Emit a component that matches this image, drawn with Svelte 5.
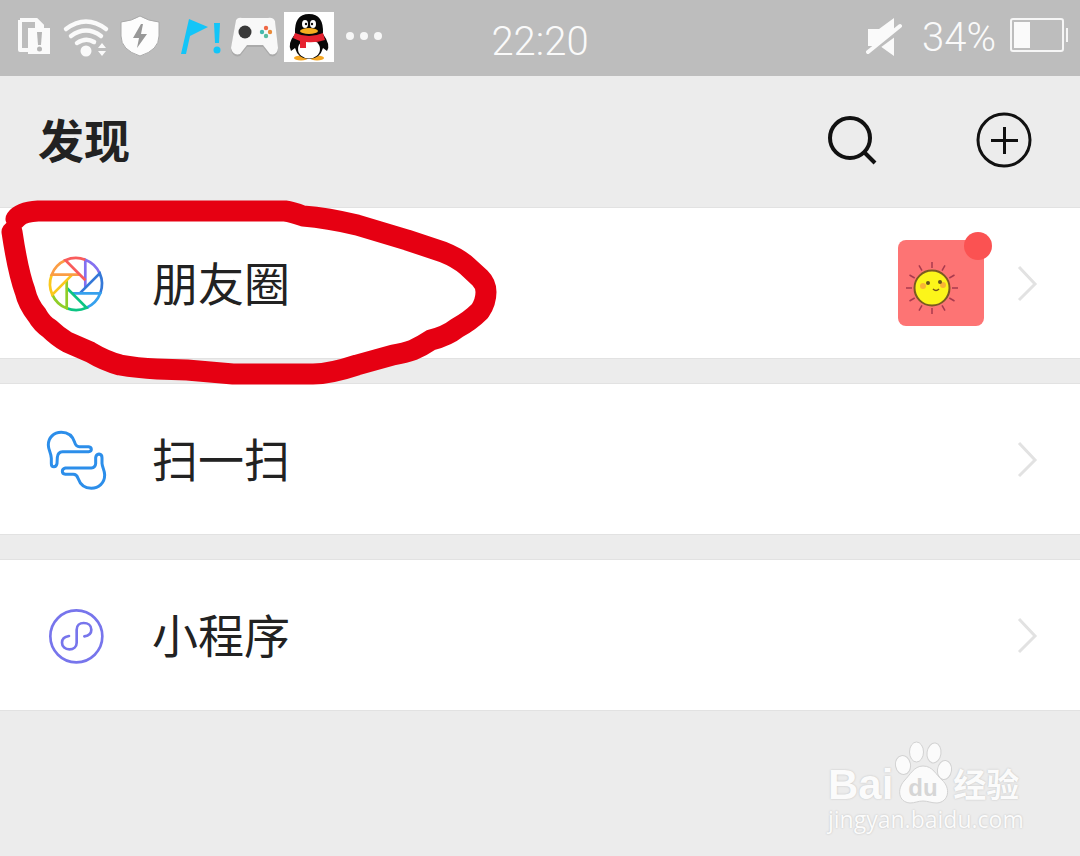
<script>
  const blades = ['#8470f0', '#3478d8', '#36a1ee', '#0cc483', '#8fce28', '#fac81c', '#fb9d45', '#f95c5c'];
  const rays = Array.from({ length: 12 }, (_, i) => i * 30);
  const rows = [
    { id: 'moments', label: '朋友圈' },
    { id: 'scan', label: '扫一扫' },
    { id: 'mini', label: '小程序' }
  ];
</script>

<div class="screen">
  <div class="status">
    <div class="notices">
      <svg viewBox="7 0 54 76" aria-hidden="true">
        <path d="M20 20H36L42 26V30M28 50H20V20" fill="none" stroke="#fafafa" stroke-width="4" stroke-linejoin="round" />
        <path d="M35 18H37L44 25V28H35z" fill="#fafafa" />
        <path d="M28 28H50V54H28z" fill="#fafafa" />
        <path d="M37 32h5l-1 13h-3z" fill="#b5b5b5" />
        <circle cx="39.500" cy="49" r="2.500" fill="#b5b5b5" />
      </svg>
      <svg viewBox="61 0 54 76" aria-hidden="true">
        <g fill="none" stroke="#fafafa" stroke-width="4.500" stroke-linecap="round">
          <path d="M66 29Q86 14 106 29" />
          <path d="M71 36Q86 25 101 36" />
          <path d="M77 43Q86 37 94 42" />
        </g>
        <circle cx="86" cy="51" r="5.500" fill="#fafafa" />
        <path d="M98 48l4-5 4 5zM98 51h8l-4 5z" fill="#fafafa" />
      </svg>
      <svg viewBox="115 0 54 76" aria-hidden="true">
        <path d="M140 16Q148 21 159 22V36Q159 50 140 56Q121 50 121 36V22Q132 21 140 16z" fill="#fdfdfd" stroke="#aaa" />
        <path d="M141 24L133 38H139L137 48L147 34H141L143 24z" fill="#989898" />
      </svg>
      <svg class="flag" viewBox="175 0 54 76" aria-hidden="true">
        <path d="M189 19L208 27L190 36L186 54H181z" fill="#13c5f8" />
        <path d="M214 23h6l-1 20h-4z" fill="#13c5f8" />
        <circle cx="217" cy="50" r="3.500" fill="#13c5f8" />
      </svg>
      <svg viewBox="229 0 54 76" aria-hidden="true">
        <path d="M236 20Q238 17 242 19H268Q273 17 275 21L278 50Q277 58 270 56L263 47H247L240 56Q233 58 231 50z" fill="#aaa" />
        <path d="M236 20Q238 17 242 18H268Q273 17 275 21L278 48Q277 56 270 54L263 45H247L240 54Q233 56 231 48z" fill="#f8f8f8" />
        <circle cx="245" cy="32" r="6.500" fill="#393939" />
        <circle cx="266" cy="28" r="2.200" fill="#ef6845" />
        <circle cx="270" cy="32" r="2.200" fill="#e98a38" />
        <circle cx="262" cy="32" r="2.200" fill="#43b9ae" />
        <circle cx="266" cy="36" r="2.200" fill="#58bca0" />
      </svg>
      <svg viewBox="283 0 54 76" aria-hidden="true">
        <path d="M284 12H334V62H284z" fill="#fff" />
        <ellipse cx="301" cy="58" rx="7" ry="2.500" fill="#f5a623" />
        <ellipse cx="317" cy="58" rx="7" ry="2.500" fill="#f5a623" />
        <path d="M309 14Q324 14 323 34Q331 45 327 51L323 48Q320 59 309 59Q298 59 295 48L291 51Q287 44 295 34Q294 14 309 14z" fill="#080808" />
        <ellipse cx="309" cy="49" rx="11" ry="9.500" fill="#fff" />
        <path d="M295 33Q309 39 323 33L325 40Q316 43 306 42V48H300V41Q295 39 293 38z" fill="#e62230" />
        <ellipse cx="305" cy="24" rx="3" ry="4" fill="#fff" />
        <ellipse cx="313" cy="24" rx="3" ry="4" fill="#fff" />
        <circle cx="306" cy="24" r="1.200" fill="#111" />
        <circle cx="312" cy="24" r="1.200" fill="#111" />
        <ellipse cx="309" cy="31" rx="9" ry="3" fill="#f6ae20" />
      </svg>
      <svg viewBox="337 0 54 76" aria-hidden="true">
        <g fill="#f7f7f7">
          <circle cx="350" cy="36" r="4" /><circle cx="364" cy="36" r="4" /><circle cx="378" cy="36" r="4" />
        </g>
      </svg>
    </div>
    <time>22:20</time>
    <div class="power">
      <svg class="mute" viewBox="866 0 44 76" aria-hidden="true">
        <path d="M868 29H879L894 18V56L880 46H868z" fill="#fafafa" />
        <path d="M866 55L903 28" stroke="#bdbdbd" stroke-width="5" />
        <path d="M868 52L900 26" stroke="#fafafa" stroke-width="4" stroke-linecap="round" />
      </svg>
      <span>34%</span>
      <svg class="battery" viewBox="1008 0 62 76" aria-hidden="true">
        <rect x="1011" y="19" width="52" height="32" rx="2" fill="none" stroke="#f6f6f6" stroke-width="2" />
        <path d="M1014 22H1030V48H1014z" fill="#fafafa" />
        <path d="M1067 28V42" stroke="#f6f6f6" stroke-width="2" />
      </svg>
    </div>
  </div>

  <header>
    <h1>发现</h1>
    <button type="button" class="tool" aria-label="搜索">
      <svg viewBox="820 110 64 64" aria-hidden="true">
        <g fill="none" stroke="#111" stroke-width="4"><circle cx="850" cy="138" r="20" /><path d="M864 152L875 163" /></g>
      </svg>
    </button>
    <button type="button" class="tool" aria-label="添加">
      <svg viewBox="972 110 64 64" aria-hidden="true">
        <g fill="none" stroke="#111" stroke-width="3"><circle cx="1004" cy="140" r="26" /><path d="M991 140.500H1018M1004.500 127V154" /></g>
      </svg>
    </button>
  </header>

  <ul>
    {#each rows as row (row.id)}
      <li>
        <button type="button" class="row">
          {#if row.id === 'moments'}
            <svg class="icon" viewBox="-32 -33 64 64" aria-hidden="true">
              {#each blades as color, i}
                <path d="M9.300 4V-24.300A26 26 0 0 1 23.700 -10.600" transform="rotate({i * 45})" fill="none" stroke={color} stroke-width="2.700" />
              {/each}
            </svg>
          {:else if row.id === 'scan'}
            <svg class="icon" viewBox="42 36 192 192" aria-hidden="true">
              <g fill="none" stroke="#2c8eea" stroke-width="9" stroke-linejoin="round">
                <path d="M176 110H98Q83 111 82 127L81 146Q79 155 72 155Q64 155 64 146V130C63 112 55 105 55 90C55 68 71 52 94 52C115 52 128 64 134 82Q138 95 148 95H176Q184 96 184 103T176 110z" />
                <path d="M106 159H184Q196 158 197 146V128Q198 118 207 117Q216 118 216 128V145C217 158 224 165 224 180C224 204 206 220 184 220C163 220 150 207 144 190Q140 178 130 178H106Q97 177 97 169T106 159z" />
              </g>
            </svg>
          {:else}
            <svg class="icon" viewBox="42 39 192 192" aria-hidden="true">
              <g fill="none" stroke="#7775ec" stroke-width="8" stroke-linecap="round">
                <circle cx="139" cy="139" r="78" />
                <path d="M117 138C103 140 96 148 96 158C96 170 106 178 118 178C131 178 140 170 140 158V119C140 107 149 99 161 99C174 99 184 107 184 119C184 130 176 137 163 139" />
              </g>
            </svg>
          {/if}
          <span class="label">{row.label}</span>
          {#if row.id === 'moments'}
            <span class="avatar">
              <svg viewBox="0 0 86 86" aria-hidden="true">
                <g transform="translate(34 48)">
                  {#each rays as angle}
                    <path d="M0 -20V-26" transform="rotate({angle})" stroke="#a93a4e" stroke-width="1.500" />
                  {/each}
                  <circle r="17.500" fill="#fcf51a" stroke="#7b5a22" stroke-width="2" />
                  <circle cx="-9" cy="-2" r="3" fill="#f9b536" /><circle cx="11" cy="-3" r="3" fill="#f9b536" />
                  <circle cx="-4" cy="-5" r="2" fill="#66561c" /><circle cx="8" cy="-6" r="2" fill="#66561c" />
                  <path d="M1 1Q4 4 7 1" fill="none" stroke="#75551b" stroke-width="1.500" />
                </g>
              </svg>
              <i class="badge"></i>
            </span>
          {/if}
          <svg class="chevron" viewBox="0 0 24 40" aria-hidden="true"><path d="M3 4L19 21L3 37" fill="none" stroke="#e2e2e2" stroke-width="3" /></svg>
        </button>
        {#if row.id === 'moments'}
          <svg class="marker" viewBox="0 190 510 200" aria-hidden="true">
            <path d="M16 219Q21 212 38 211H285Q292 212 303 216Q328 218 357 225L407 240L443 252Q458 258 467 266L480 278Q486 284 486 292Q486 302 480 311Q470 321 457 328Q447 336 431 340Q422 346 413 350Q405 353 393 355L357 365Q330 374 313 374H233L187 370L157 369Q137 368 120 365Q105 361 90 352L67 342Q57 336 50 329Q42 324 37 315Q28 304 25 291Q18 272 12 232" fill="none" stroke="#e60012" stroke-width="21" stroke-linecap="round" stroke-linejoin="round" />
          </svg>
        {/if}
      </li>
    {/each}
  </ul>

  <footer>
    <div class="brand">
      <span class="bai">Bai</span>
      <svg viewBox="892 738 60 66" aria-hidden="true">
        <g fill="#fbfbfb" stroke="#d2d2d2" stroke-width="1">
          <ellipse cx="902" cy="764" rx="7.500" ry="9.500" transform="rotate(-10 902 764)" />
          <ellipse cx="915.500" cy="751" rx="7" ry="10" />
          <ellipse cx="933" cy="752" rx="7" ry="10" transform="rotate(8 933 752)" />
          <ellipse cx="943.500" cy="769" rx="7" ry="9.500" transform="rotate(8 943.500 769)" />
          <path d="M922 765C932 765 935 774 941 779C950 787 948 801 936 802C930 802 927 800 922 800C917 800 914 802 909 802C897 801 896 788 903 780C909 774 913 765 922 765z" />
        </g>
        <text x="922" y="795" text-anchor="middle">du</text>
      </svg>
      <span class="exp">经验</span>
    </div>
    <div class="site">jingyan.baidu.com</div>
  </footer>
</div>

<style>
  :global(body) { margin: 0; background: #ececec; }
  .screen { min-height: 100vh; background: #ececec; color: #222; font-family: Roboto, "Noto Sans CJK SC", sans-serif; }
  svg { display: block; flex: none; }
  .status { display: grid; grid-template-columns: 1fr auto 1fr; align-items: center; height: 76px; background: #bdbdbd; color: #fafafa; font-size: 40px; font-weight: 300; line-height: 48px; }
  .notices { display: flex; padding-left: 7px; }
  .notices svg { width: 54px; height: 76px; }
  .notices .flag { margin-left: 6px; }
  time { padding-top: 8px; }
  .power { display: flex; align-items: center; justify-content: flex-end; gap: 12px; padding-right: 10px; }
  .mute { width: 44px; height: 76px; }
  .battery { width: 62px; height: 76px; }
  header { display: flex; align-items: center; gap: 88px; height: 131px; padding: 0 44px 0 38px; }
  h1 { flex: 1; margin: 0; padding-bottom: 8px; font: 700 46px/64px "Noto Sans CJK SC", sans-serif; }
  button { border: 0; background: none; padding: 0; color: inherit; cursor: pointer; }
  .tool, .tool svg { width: 64px; height: 64px; }
  ul { display: grid; gap: 24px; margin: 0; padding: 0; list-style: none; }
  li { position: relative; }
  .row { display: flex; align-items: center; box-sizing: border-box; width: 100%; height: 152px; padding: 0 40px 0 44px; background: #fff; border: solid #e2e2e2; border-width: 1px 0; text-align: left; }
  .icon { width: 64px; height: 64px; }
  .label { flex: 1; margin-left: 44px; padding-bottom: 4px; font: 400 46px/64px "Noto Sans CJK SC", sans-serif; }
  .avatar { position: relative; width: 86px; height: 86px; margin-right: 32px; border-radius: 8px; background: #fd7474; }
  .badge { position: absolute; top: -8px; right: -8px; width: 28px; height: 28px; border-radius: 50%; background: #fb5252; }
  .chevron { width: 24px; height: 40px; }
  .marker { position: absolute; z-index: 1; top: -17px; left: 0; width: 510px; height: 200px; pointer-events: none; }
  footer { display: flex; flex-direction: column; width: 194px; margin: 28px 58px 0 auto; color: #fbfbfb; text-shadow: 0 0 2px #bbb; }
  .brand { display: flex; align-items: flex-end; height: 66px; }
  .brand svg { width: 60px; height: 66px; }
  .bai { font: 700 42px/40px "Liberation Sans", Arial, sans-serif; }
  .exp { font: 700 33px/44px "Noto Sans CJK SC", sans-serif; }
  .brand text { font: 700 24px "Liberation Sans", Arial, sans-serif; fill: #d6d6d6; text-shadow: none; }
  .site { font: 400 23px/28px "Open Sans", sans-serif; }
</style>
